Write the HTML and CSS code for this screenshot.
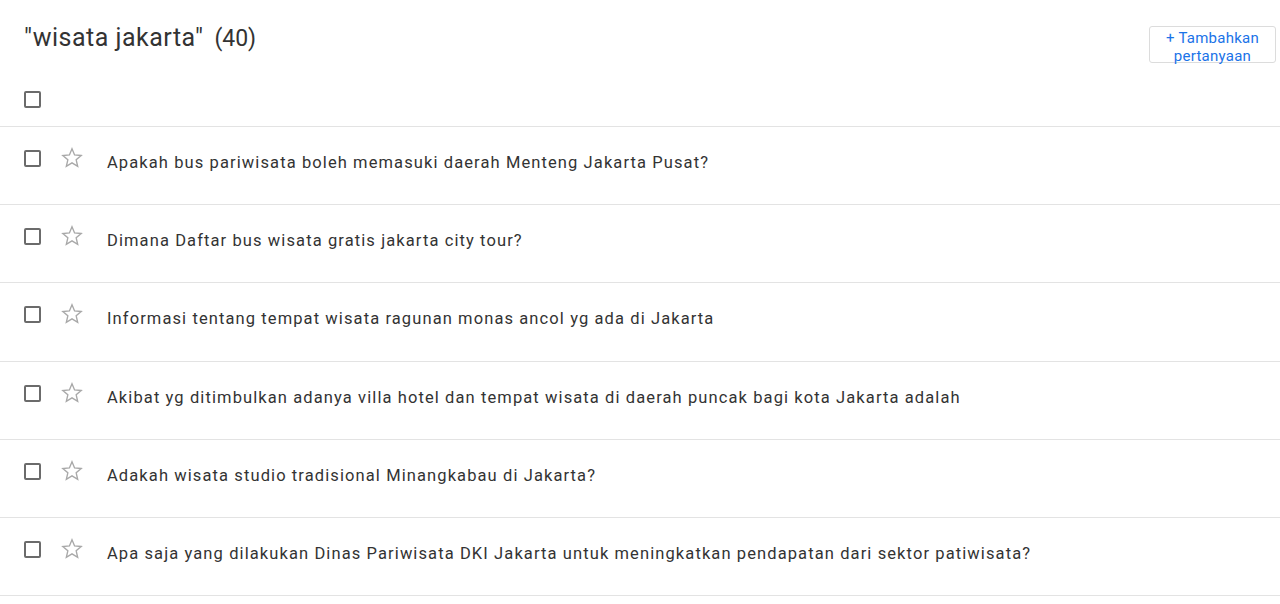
FILE: index.html
```html
<!DOCTYPE html>
<html>
<head>
<meta charset="utf-8">
<link rel="stylesheet" href="styles.css">
</head>
<body>
<div class="page">
  <div class="header">
    <h1 class="title"><span class="query">"wisata jakarta"</span><span class="count">(40)</span></h1>
    <a class="add-btn">+ Tambahkan<br>pertanyaan</a>
  </div>
  <div class="select-all"><span class="checkbox"></span></div>
  <ul class="list">
    <li class="row"><span class="checkbox"></span><svg class="star" viewBox="0 0 24 24"><path d="M22 9.24l-7.19-.62L12 2 9.19 8.63 2 9.24l5.46 4.73L5.82 21 12 17.27 18.18 21l-1.630-7.03L22 9.24z"/></svg><span class="q">Apakah bus pariwisata boleh memasuki daerah Menteng Jakarta Pusat?</span></li>
    <li class="row"><span class="checkbox"></span><svg class="star" viewBox="0 0 24 24"><path d="M22 9.24l-7.19-.62L12 2 9.19 8.63 2 9.24l5.46 4.73L5.82 21 12 17.27 18.18 21l-1.63-7.03L22 9.24z"/></svg><span class="q">Dimana Daftar bus wisata gratis jakarta city tour?</span></li>
    <li class="row"><span class="checkbox"></span><svg class="star" viewBox="0 0 24 24"><path d="M22 9.24l-7.19-.62L12 2 9.19 8.63 2 9.24l5.46 4.73L5.82 21 12 17.27 18.18 21l-1.63-7.03L22 9.24z"/></svg><span class="q">Informasi tentang tempat wisata ragunan monas ancol yg ada di Jakarta</span></li>
    <li class="row"><span class="checkbox"></span><svg class="star" viewBox="0 0 24 24"><path d="M22 9.24l-7.19-.62L12 2 9.19 8.63 2 9.24l5.46 4.73L5.82 21 12 17.27 18.18 21l-1.63-7.03L22 9.24z"/></svg><span class="q">Akibat yg ditimbulkan adanya villa hotel dan tempat wisata di daerah puncak bagi kota Jakarta adalah</span></li>
    <li class="row"><span class="checkbox"></span><svg class="star" viewBox="0 0 24 24"><path d="M22 9.24l-7.19-.62L12 2 9.19 8.63 2 9.24l5.46 4.73L5.82 21 12 17.27 18.18 21l-1.63-7.03L22 9.24z"/></svg><span class="q">Adakah wisata studio tradisional Minangkabau di Jakarta?</span></li>
    <li class="row"><span class="checkbox"></span><svg class="star" viewBox="0 0 24 24"><path d="M22 9.24l-7.19-.62L12 2 9.19 8.63 2 9.24l5.46 4.73L5.82 21 12 17.27 18.18 21l-1.63-7.03L22 9.24z"/></svg><span class="q">Apa saja yang dilakukan Dinas Pariwisata DKI Jakarta untuk meningkatkan pendapatan dari sektor patiwisata?</span></li>
  </ul>
</div>
</body>
</html>
```
FILE: styles.css
```css
* { box-sizing: border-box; }
html, body { margin: 0; padding: 0; background: #fff; }
body { font-family: Roboto, "Noto Sans", sans-serif; color: #333; }
.page { width: 1280px; }
.header {
  display: flex;
  justify-content: space-between;
  align-items: flex-start;
  padding: 20px 4px 0 24px;
  height: 80px;
}
.title {
  margin: 0;
  font-size: 25px;
  font-weight: 400;
  line-height: 36px;
  color: #333;
  white-space: nowrap;
}
.query { letter-spacing: 0.5px; }
.count { margin-left: 11px; font-size: 23px; }
.add-btn {
  display: block;
  margin-top: 6px;
  width: 127px;
  height: 37px;
  padding: 2px 0 0;
  background: #fff;
  border: 1px solid #dcdcdc;
  border-radius: 3px;
  color: #1a73e8;
  font-size: 15px;
  letter-spacing: 0.25px;
  line-height: 18px;
  text-align: center;
  white-space: nowrap;
}
.select-all {
  height: 47px;
  padding: 11px 0 0 24px;
  border-bottom: 1px solid #e3e3e3;
}
.checkbox {
  display: inline-block;
  width: 17px;
  height: 17px;
  border: 2px solid #6b6b6b;
  border-radius: 2px;
  flex: none;
}
.list { list-style: none; margin: 0; padding: 0; }
.row {
  display: flex;
  align-items: flex-start;
  height: 78.2px;
  padding: 23px 0 0 24px;
  border-bottom: 1px solid #e3e3e3;
}
.star {
  flex: none;
  width: 22px;
  height: 22px;
  margin: -3px 0 0 20px;
  fill: none;
  stroke: #a8a8a8;
  stroke-width: 1.5;
  stroke-linejoin: miter;
}
.q {
  margin: 3px 0 0 24px;
  font-size: 16.5px;
  line-height: 20px;
  letter-spacing: 1.1px;
  color: #333;
  white-space: nowrap;
}
```
